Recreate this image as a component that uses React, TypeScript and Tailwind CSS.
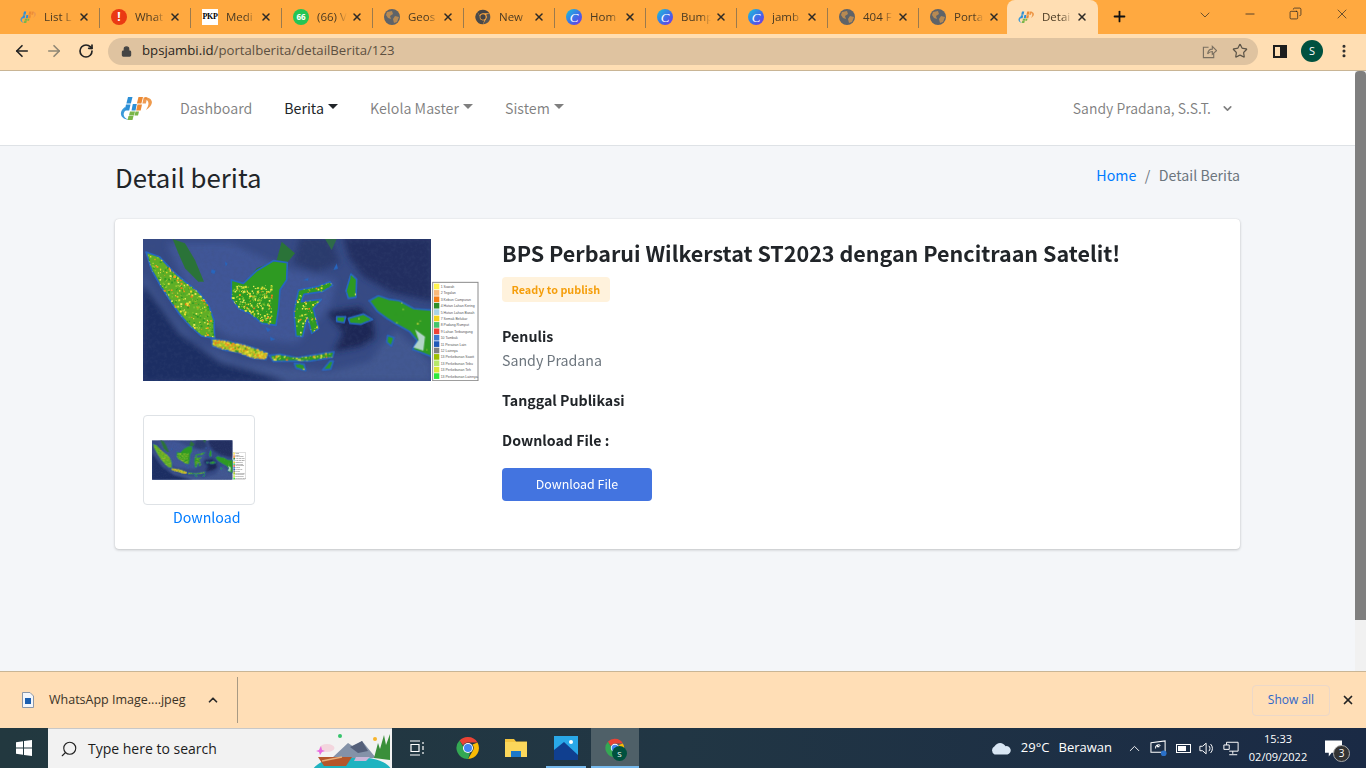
import type { ReactNode } from "react";
import {
  ArrowLeft,
  ArrowRight,
  ChevronDown,
  ChevronUp,
  Copy,
  Lock,
  Minus,
  MoreVertical,
  Plus,
  RotateCw,
  Search,
  Star,
  X,
} from "lucide-react";

const SOURCE = "[font-family:'Noto_Sans_CJK_SC','Noto_Sans',sans-serif]";
const UI = "[font-family:'Open_Sans','Noto_Sans',sans-serif]";

function Logo({ className }: { className?: string }) {
  return (
    <svg viewBox="0 0 32 26" className={className}>
      <path d="M5 12 C-1 16 -1 24 9 25 C4 23 1 19 7 14 Z" fill="#3b9ad9" />
      <path d="M25 2 C33 3 35 9 26 15 C30 9 29 5 24 3.500 Z" fill="#ee9a4d" />
      <path d="M8 2 h4.500 l-1.600 6.500 h-4.500 z" fill="#2c8fd6" />
      <path d="M6 9.500 h4.500 l-1.300 6 h-4.500 z" fill="#2c8fd6" />
      <path d="M12.800 9 h4 l-1.300 6.500 h-4 z" fill="#2c8fd6" />
      <path d="M18.500 2 h4.500 l-1.600 6.500 h-4.500 z" fill="#ec8a34" />
      <path d="M23.700 2.500 h3.500 l-1.300 6 h-3.500 z" fill="#ec8a34" opacity=".85" />
      <path d="M17.500 9.500 h4.500 l-1.300 6 h-4.500 z" fill="#ec8a34" />
      <path d="M10 16.500 h5 l-1 4 h-5 z" fill="#7ab648" />
      <path d="M15.500 16.500 h3.500 l-1 4 h-3.500 z" fill="#7ab648" />
      <path d="M8.500 21 h5 l-1 4 h-5 z" fill="#7ab648" />
    </svg>
  );
}

function Globe() {
  return (
    <svg viewBox="0 0 16 16" className="size-4 shrink-0">
      <circle cx="8" cy="8" r="8" fill="#5f6368" />
      <path d="M3 3 L8 2 L9 5 L6 7 L7 10 L4 9 L2 6 Z M11 7 L15 8 L13 13 L10 14 L9 10 Z" fill="#ffa940" opacity=".55" />
    </svg>
  );
}

function ChromeIcon({ size = 16, mono = false }: { size?: number; mono?: boolean }) {
  const [r, y, g] = mono ? ["#444", "#555", "#4a4a4a"] : ["#ea4335", "#fbbc04", "#34a853"];
  return (
    <svg viewBox="0 0 24 24" width={size} height={size} className="shrink-0">
      <path d="M12 1 A11 11 0 0 1 21.500 6.500 L12 6.500 A5.500 5.500 0 0 0 7 9.500 L3.500 4.500 A11 11 0 0 1 12 1 Z" fill={r} />
      <path d="M21.500 6.500 A11 11 0 0 1 12 23 L16.800 14.800 A5.500 5.500 0 0 0 16.500 8.500 Z" fill={y} />
      <path d="M12 23 A11 11 0 0 1 3.500 4.500 L8 12 A5.500 5.500 0 0 0 14 17 Z" fill={g} />
      <circle cx="12" cy="12" r="5" fill={mono ? "#ffa940" : "#fff"} />
      <circle cx="12" cy="12" r="4" fill={mono ? "#444" : "#4285f4"} />
    </svg>
  );
}

function Canva() {
  return (
    <span className="flex size-4 shrink-0 items-center justify-center rounded-full bg-[linear-gradient(135deg,#19c6d8,#3f6ee8_55%,#7a2fe0)] font-['Liberation_Serif',serif] text-[13px] italic leading-none text-white">
      C
    </span>
  );
}

const tabs: { title: string; icon: ReactNode }[] = [
  { title: "List L", icon: <Logo className="size-4 shrink-0" /> },
  {
    title: "What",
    icon: (
      <span className="flex size-4 shrink-0 items-center justify-center rounded-full bg-[#ea3a13] text-[12px] font-bold leading-none text-white">
        !
      </span>
    ),
  },
  {
    title: "Medi",
    icon: (
      <span className="flex h-4 w-4 shrink-0 items-center justify-center bg-white font-['Liberation_Serif',serif] text-[8px] font-bold leading-none tracking-tighter text-black">
        PKP
      </span>
    ),
  },
  {
    title: "(66) V",
    icon: (
      <span className="flex size-4 shrink-0 items-center justify-center rounded-full bg-[#25c554] text-[8px] font-bold leading-none text-white">
        66
      </span>
    ),
  },
  { title: "Geos", icon: <Globe /> },
  { title: "New", icon: <ChromeIcon mono /> },
  { title: "Hom", icon: <Canva /> },
  { title: "Bump", icon: <Canva /> },
  { title: "jamb", icon: <Canva /> },
  { title: "404 F", icon: <Globe /> },
  { title: "Porta", icon: <Globe /> },
  { title: "Detai", icon: <Logo className="size-4 shrink-0" /> },
];

function Tab({ title, icon, active, last }: { title: string; icon: ReactNode; active: boolean; last: boolean }) {
  return (
    <div
      className={`relative flex h-[34px] w-[91px] shrink-0 items-center pl-[11px] pr-[10px] ${
        active ? "-ml-[3px] rounded-t-lg bg-[#ffdeb3]" : ""
      }`}
    >
      {icon}
      <span className="ml-2 w-[30px] overflow-hidden whitespace-nowrap text-[11.5px] text-[#4a3a22] [mask-image:linear-gradient(90deg,#000_65%,transparent)]">
        {title}
      </span>
      <X className="ml-auto size-3 text-[#2d2a26]" strokeWidth={3} />
      {!active && !last && <span className="absolute right-0 top-2 h-5 w-px bg-[#9b7a4d]" />}
    </div>
  );
}

/* Satellite map, drawn in the coordinates of a 3x crop */
const ISLANDS: { id: string; d: string; n: number; hot: number }[] = [
  { id: "sum", d: "M48 66 L88 80 L130 125 L172 160 L208 188 L236 225 L252 270 L254 325 L214 318 L180 288 L148 252 L118 208 L92 168 L64 118 Z", n: 800, hot: 0.3 },
  { id: "kal", d: "M304 150 L340 160 L380 122 L430 92 L472 98 L470 150 L450 180 L446 235 L438 286 L395 280 L362 252 L326 236 L304 205 Z", n: 480, hot: 0.12 },
  { id: "jav", d: "M245 326 L290 333 L335 343 L380 356 L414 370 L408 388 L370 385 L325 368 L285 360 L248 348 Z", n: 560, hot: 0.75 },
  { id: "nus", d: "M418 376 L450 373 L500 383 L545 376 L612 365 L607 382 L540 393 L480 393 L430 394 Z", n: 110, hot: 0.35 },
  { id: "sul", d: "M506 180 L560 170 L600 155 L608 166 L578 185 L522 193 L514 215 L555 210 L574 208 L550 236 L566 296 L545 310 L532 262 L518 320 L498 318 L492 250 L498 213 Z", n: 220, hot: 0.3 },
  { id: "mal", d: "M648 182 L663 132 L680 148 L678 202 L655 205 Z M620 260 L647 260 L642 278 L620 274 Z M655 265 L700 252 L728 268 L692 283 L660 280 Z", n: 20, hot: 0.05 },
  { id: "pap", d: "M718 212 L745 197 L778 208 L808 212 L852 236 L905 240 L905 380 L875 368 L848 358 L862 332 L838 304 L798 282 L772 266 L742 244 Z M773 316 L792 323 L784 348 L770 336 Z", n: 20, hot: 0 },
  { id: "tim", d: "M578 420 L600 393 L610 393 L602 417 Z M493 400 L522 403 L527 422 L498 414 Z", n: 30, hot: 0.5 },
];

const BOUNDS: Record<string, [number, number, number, number]> = {
  sum: [48, 66, 207, 260],
  kal: [304, 165, 120, 122],
  jav: [245, 326, 170, 62],
  nus: [418, 365, 195, 29],
  sul: [492, 155, 116, 165],
  mal: [620, 132, 108, 150],
  pap: [718, 197, 187, 183],
  tim: [493, 393, 117, 30],
};

function rng(seed: number) {
  let s = seed;
  return () => {
    s = (s * 16807) % 2147483647;
    return s / 2147483647;
  };
}

const LEGEND: [string, string][] = [
  ["#fff34d", "1 Sawah"],
  ["#f9b97a", "2 Tegalan"],
  ["#f57f17", "3 Kebun Campuran"],
  ["#2f8f2a", "4 Hutan Lahan Kering"],
  ["#a7d3e8", "5 Hutan Lahan Basah"],
  ["#f2d21f", "7 Semak Belukar"],
  ["#43c46c", "8 Padang Rumput"],
  ["#ef4136", "9 Lahan Terbangung"],
  ["#3f78d0", "10 Tambak"],
  ["#2159b8", "11 Perairan Lain"],
  ["#808080", "12 Lainnya"],
  ["#9cbf00", "13 Perkebunan Sawit"],
  ["#b5e86a", "13 Perkebunan Tebu"],
  ["#dbe63a", "13 Perkebunan Teh"],
  ["#2ee83a", "13 Perkebunan Lainnya"],
];

function SatelliteMap({ prefix }: { prefix: string }) {
  const r = rng(4217);
  return (
    <svg viewBox="39 27 1008 426" className="block h-full w-full">
      <defs>
        {ISLANDS.map((i) => (
          <clipPath key={i.id} id={`${prefix}-${i.id}`}>
            <path d={i.d} />
          </clipPath>
        ))}
        <clipPath id={`${prefix}-frame`}>
          <rect x="39" y="27" width="864" height="426" />
        </clipPath>
        <filter id={`${prefix}-soft`}>
          <feGaussianBlur stdDeviation="9" />
        </filter>
        <filter id={`${prefix}-fine`}>
          <feGaussianBlur stdDeviation="1" />
        </filter>
        <filter id={`${prefix}-noise`}>
          <feTurbulence type="fractalNoise" baseFrequency="0.09" numOctaves="3" seed="8" />
          <feColorMatrix values="0 0 0 0 0.05  0 0 0 0 0.08  0 0 0 0 0.2  0 0 0 1.6 -0.65" />
        </filter>
      </defs>
      <g clipPath={`url(#${prefix}-frame)`}>
        <rect x="39" y="27" width="864" height="426" fill="#364a85" />
        <g filter={`url(#${prefix}-soft)`}>
          <path d="M110 40 L300 40 L480 120 L620 150 L600 230 L500 340 L300 320 L250 290 L170 170 Z" fill="#415697" />
          <path d="M39 135 L110 240 L200 340 L330 395 L470 415 L600 425 L720 395 L760 340 L800 300 L903 400 L903 453 L39 453 Z" fill="#425892" />
          <path d="M39 160 L150 310 L270 395 L430 440 L480 460 L30 460 Z" fill="#1f2f63" />
          <path d="M640 20 L910 20 L910 215 L790 190 L700 140 L655 80 Z" fill="#212f60" />
          <path d="M590 245 L690 230 L730 275 L735 325 L690 350 L610 365 L640 310 Z" fill="#1b2855" />
          <path d="M510 20 L600 20 L630 100 L560 125 L490 100 Z" fill="#2a3a6d" />
        </g>
        <rect x="39" y="27" width="864" height="426" filter={`url(#${prefix}-noise)`} opacity=".3" />
        <g filter={`url(#${prefix}-fine)`}>
          <path d="M128 27 L165 40 L195 90 L222 155 L205 155 L165 115 L145 70 Z" fill="#2c7339" />
          <path d="M345 160 L380 115 L440 90 L455 35 L495 70 L470 100 L420 115 L395 130 Z" fill="#2c7339" />
          <path d="M585 27 L620 27 L605 60 Z" fill="#2f6b49" />
          {ISLANDS.map((i) => {
            const [x, y, w, h] = BOUNDS[i.id];
            return (
              <g key={i.id}>
                <path d={i.d} fill={i.id === "sum" ? "#5fae28" : i.id === "jav" ? "#a8c42a" : "#2f9a24"} stroke="#2766bf" strokeWidth="5" strokeLinejoin="round" />
                <g clipPath={`url(#${prefix}-${i.id})`}>
                  {Array.from({ length: i.n }).map((_, k) => {
                    const hot = r() < i.hot;
                    const c = hot
                      ? ["#f2e23a", "#f0791c", "#e9d92f", "#f0991c"][Math.floor(r() * 4)]
                      : ["#7cc22e", "#d8df3a", "#ecec5c", "#2f9a24", "#2f9a24"][Math.floor(r() * 5)];
                    const s = 2 + r() * 4;
                    return <rect key={k} x={x + r() * w} y={y + r() * h} width={s} height={s} fill={c} />;
                  })}
                </g>
              </g>
            );
          })}
          <path d="M855 298 L885 320 L880 362 L850 352 L866 330 Z" fill="#c9dfe4" opacity=".85" />
          <path d="M245 118 l12 4 l-4 10 l-10 -4 Z M285 95 l8 6 l-6 8 Z M405 290 l18 8 l-10 8 Z M520 150 l16 -6 l-2 8 Z M610 120 l10 -20 l4 16 Z M420 320 l16 8 l-14 4 Z" fill="#2766bf" />
        </g>
      </g>
      <rect x="908" y="157" width="136" height="295" fill="#fff" stroke="#8a8a8a" strokeWidth="3" />
      {LEGEND.map(([c, label], idx) => (
        <g key={c}>
          <rect x="912" y={161 + idx * 19.2} width="16" height="17" fill={c} />
          <text x="932" y={174 + idx * 19.2} fontSize="10.500" fill="#555" fontFamily="'Liberation Sans', sans-serif">
            {label}
          </text>
        </g>
      ))}
    </svg>
  );
}

function NavItem({ label, active, caret = true }: { label: string; active?: boolean; caret?: boolean }) {
  return (
    <a className={`flex items-center ${active ? "text-[#212529]" : "text-[#00000080]"}`}>
      {label}
      {caret && <span className="ml-[4px] mt-[-3px] size-0 border-x-[5px] border-t-[5px] border-x-transparent border-t-current" />}
    </a>
  );
}

function Browser() {
  return (
    <div className={`shrink-0 ${UI}`}>
      <div className="flex h-[34px] items-stretch bg-[#ffa940] pl-[9px]">
        {tabs.map((t, i) => (
          <Tab key={i} title={t.title} icon={t.icon} active={i === 11} last={i === 10} />
        ))}
        <Plus className="ml-[13px] mt-[8px] size-[17px] text-[#111]" strokeWidth={2.5} />
        <div className="ml-auto flex items-start text-[#222]">
          <ChevronDown className="mr-[30px] mt-[7px] size-4" strokeWidth={1} />
          <Minus className="mr-[32px] mt-[7px] size-[14px]" strokeWidth={1.3} />
          <Copy className="mr-[32px] mt-[7px] size-[13px] -scale-x-100" strokeWidth={1.3} />
          <X className="mr-4 mt-[6px] size-4" strokeWidth={1} />
        </div>
      </div>
      <div className="flex h-[37px] items-center border-b border-[#c9b595] bg-[#ffdeb3] pb-[2px]">
        <ArrowLeft className="ml-[13px] size-[18px] text-[#222]" strokeWidth={2.2} />
        <ArrowRight className="ml-[14px] size-[18px] text-[#8f8674]" strokeWidth={2.2} />
        <RotateCw className="ml-[15px] size-4 text-[#222]" strokeWidth={2.5} />
        <div className="ml-[14px] flex h-[27px] w-[1150px] items-center rounded-full bg-[#dfc3a0] pl-[13px] pr-[10px]">
          <Lock className="size-[11px] fill-[#444] text-[#444]" strokeWidth={2.5} />
          <span className="ml-[10px] text-[13.2px] text-[#5d5040]">
            <span className="text-[#2b261e]">bpsjambi.id</span>/portalberita/detailBerita/123
          </span>
          <svg viewBox="0 0 16 16" className="ml-auto mr-[15px] size-[15px]" fill="none" stroke="#7a6f5f" strokeWidth="1.200">
            <path d="M7 3.500 H1.500 V14.500 H12.500 V10 M6 10.500 C6.500 7 9 5.500 11 5.500 V2.500 L15.500 7 L11 11 V8 C9 8 7.500 8.500 6 10.500 Z" />
          </svg>
          <Star className="size-4 text-[#5c5447]" strokeWidth={1.8} />
        </div>
        <span className="ml-[15px] flex h-[13px] w-[14px] justify-end border-2 border-[#1d1d1d]">
          <span className="h-full w-[5px] bg-[#1d1d1d]" />
        </span>
        <span className="ml-[14px] flex size-[22px] items-center justify-center rounded-full bg-[#00513f] text-[11px] text-white">
          S
        </span>
        <MoreVertical className="ml-[13px] size-4 text-[#2c2c2c]" strokeWidth={2.6} />
      </div>
    </div>
  );
}

function Page() {
  return (
    <div className={`flex min-h-0 flex-1 overflow-hidden bg-[#f4f6f9] ${SOURCE}`}>
      <div className="min-w-0 flex-1 text-[14.2px] text-[#212529]">
        <nav className="flex h-[75px] items-center border-b border-[#dee2e6] bg-white pl-[120px] pr-[121px]">
          <Logo className="h-[26px] w-8" />
          <div className="ml-7 flex items-center gap-8 pt-[1px]">
            <NavItem label="Dashboard" caret={false} />
            <NavItem label="Berita" active />
            <NavItem label="Kelola Master" />
            <NavItem label="Sistem" />
          </div>
          <div className="ml-auto flex items-center pt-[1px] text-[13.9px] text-[#00000080]">
            Sandy Pradana, S.S.T.
            <ChevronDown className="ml-[10px] size-[13px]" strokeWidth={3} />
          </div>
        </nav>
        <div className="flex h-[73px] items-start justify-between px-[115px] pt-[13px]">
          <h1 className="text-[25.8px] leading-[36px]">Detail berita</h1>
          <div className="flex items-center pt-[4px] leading-6">
            <a className="text-[#007bff]">Home</a>
            <span className="mx-[8.5px] text-[#6c757d]">/</span>
            <span className="text-[#6c757d]">Detail Berita</span>
          </div>
        </div>
        <section className="mx-[115px] flex h-[330px] rounded bg-white pl-7 pt-5 shadow-[0_0_1px_rgba(0,0,0,.13),0_1px_3px_rgba(0,0,0,.2)]">
          <div className="w-[359px] shrink-0">
            <div className="h-[142px] w-[336px]">
              <SatelliteMap prefix="main" />
            </div>
            <div className="mt-[34px] flex h-[90px] w-[112px] items-center justify-center rounded border border-[#dee2e6] bg-white">
              <div className="h-[40px] w-[94px]">
                <SatelliteMap prefix="thumb" />
              </div>
            </div>
            <a className="ml-[30px] block leading-6 text-[#007bff]">Download</a>
          </div>
          <div>
            <h2 className="text-[21.5px] font-bold leading-[28px]">BPS Perbarui Wilkerstat ST2023 dengan Pencitraan Satelit!</h2>
            <span className="mt-[10px] inline-block h-[25px] rounded bg-[#fff2dc] px-[9.5px] text-[10.8px] font-bold leading-[25px] text-[#f59e0b]">
              Ready to publish
            </span>
            <p className="mt-[22px] font-bold leading-6">Penulis</p>
            <p className="leading-6 text-[#6c757d]">Sandy Pradana</p>
            <p className="mt-4 font-bold leading-6">Tanggal Publikasi</p>
            <p className="mt-4 font-bold leading-6">Download File :</p>
            <button className="mt-[16px] h-[33px] w-[150px] rounded bg-[#4374e0] text-[12.4px] text-white">
              Download File
            </button>
          </div>
        </section>
      </div>
      <div className="w-[11px] shrink-0 bg-[#f1f1f1]">
        <div className="h-[549px] rounded-t-[4px] bg-[#7f7f7f]" />
      </div>
    </div>
  );
}

function DownloadBar() {
  return (
    <div className={`flex h-[57px] shrink-0 items-center border-t border-[#c9b595] bg-[#ffdeb6] ${UI}`}>
      <svg viewBox="0 0 12 16" className="ml-[22px] h-4 w-3">
        <path d="M.5.5 h7.500 l3.500 3.500 v11.500 h-11 z" fill="#f4f6fa" stroke="#8b97a8" />
        <rect x="3" y="6" width="6" height="6" fill="#1b5fb0" />
      </svg>
      <span className="ml-[15px] w-[137px] whitespace-nowrap text-[12.5px] text-[#3a3226]">WhatsApp Image....jpeg</span>
      <ChevronUp className="ml-5 size-[14px] text-[#2b2b2b]" strokeWidth={3} />
      <span className="ml-[17px] h-[46px] w-px bg-[#a89a84]" />
      <button className="ml-auto h-[31px] w-[78px] rounded border border-[#ecd8c8] text-xs text-[#2f66c8]">Show all</button>
      <X className="ml-[11px] mr-[11px] size-[14px] text-[#222]" strokeWidth={3} />
    </div>
  );
}

function Taskbar() {
  return (
    <div className={`flex h-10 shrink-0 items-center bg-[linear-gradient(90deg,#22383f,#213644_50%,#1a2a45)] text-white ${UI}`}>
      <div className="flex w-12 justify-center">
        <svg viewBox="0 0 16 16" className="size-4" fill="#fff">
          <path d="M0 2.300 L7 1.300 V7.600 H0 Z M8 1.100 L16 0 V7.600 H8 Z M0 8.400 H7 V14.700 L0 13.700 Z M8 8.400 H16 V16 L8 14.900 Z" />
        </svg>
      </div>
      <div className="relative flex h-10 w-[344px] items-center overflow-hidden border-t border-[#c8c8c8] bg-[#f2f2f2] pl-3 text-[#1c1c1c]">
        <Search className="size-[18px] -scale-x-100 text-[#222]" strokeWidth={1.5} />
        <span className="ml-[10px] text-[14px]">Type here to search</span>
        <svg viewBox="0 0 80 40" className="absolute right-0 top-0 h-10 w-20">
          <path d="M1 40 C8 30 25 28 40 28 C58 28 74 31 79 40 Z" fill="#1fb3c0" />
          <path d="M20 29 L36 14 L42 18 L50 12 L64 29 Z" fill="#8492a8" />
          <path d="M38 18 L50 12 L56 22 L46 24 Z" fill="#55607a" />
          <path d="M62 29 L66 14 L68 20 L72 6 L74 16 L78 5 V31 Z" fill="#3a8f3a" />
          <path d="M6 28 H40 L34 37 H12 Z" fill="#b5562a" />
          <path d="M10 32 L30 28" stroke="#e8b07a" strokeWidth="1.500" />
          <path d="M44 28 h14 l-4 4 h-12 Z" fill="#c9b6d8" />
          <ellipse cx="15" cy="19" rx="7.500" ry="4" fill="#f3d6de" />
          <path d="M4 22 L7 21 L9 17 L10 21 L13 22 L10 23 L8 26 L7 23 Z" fill="#e86be0" />
          <circle cx="28" cy="7" r="2" fill="#36c46c" />
          <circle cx="63" cy="10" r="2" fill="#f7b42c" />
        </svg>
      </div>
      <svg viewBox="0 0 16 16" className="ml-[17px] size-4" fill="none" stroke="#fff" strokeWidth="1.2">
        <path d="M1 1h10M1 15h10M2 4.500h8v7H2zM14 2v2M14 6v4M14 12v2" />
      </svg>
      <span className="ml-[31px]">
        <ChromeIcon size={24} />
      </span>
      <svg viewBox="0 0 24 24" className="ml-[24px] size-6">
        <path d="M1 3h9l2 2.500h11V21H1Z" fill="#f4c53e" />
        <rect x="1" y="6" width="22" height="15" fill="#fbd75b" />
        <rect x="7" y="15" width="10" height="6" fill="#1b78c9" />
      </svg>
      <div className="relative ml-[18px] flex h-10 w-10 items-center justify-center">
        <svg viewBox="0 0 24 24" className="size-6">
          <rect width="24" height="24" fill="#29a8e8" />
          <path d="M0 24 V14 L10 6 L24 19 V24 Z" fill="#103f8f" />
          <circle cx="17" cy="6" r="2" fill="#fff" />
        </svg>
        <span className="absolute inset-x-0 bottom-0 h-[2px] bg-[#76b9ed]" />
      </div>
      <div className="relative ml-[5px] flex h-10 w-12 items-center justify-center bg-[#4f6068]">
        <ChromeIcon size={20} />
        <span className="absolute bottom-[7px] right-3 flex size-[15px] items-center justify-center rounded-full bg-[#00513f] text-[8px] text-white">
          S
        </span>
        <span className="absolute inset-x-0 bottom-0 h-[2px] bg-[#76b9ed]" />
      </div>
      <svg viewBox="0 0 24 14" className="ml-auto h-[14px] w-[22px]" fill="#d8e6f4">
        <path d="M5 14 a5 5 0 0 1 0-9 a7 7 0 0 1 12 0 a4.500 4.500 0 0 1 2 9 Z" />
      </svg>
      <span className="ml-[9px] text-[13px]">29°C</span>
      <span className="ml-[9px] text-[13px]">Berawan</span>
      <ChevronUp className="ml-[14px] size-[17px]" strokeWidth={1.3} />
      <svg viewBox="0 0 18 18" className="ml-[7px] size-[17px]" fill="none" stroke="#fff" strokeWidth="1.1">
        <path d="M1 3 L16 1 V13 H1 Z M11 6 a3 3 0 0 0-5 3 M8 5 v2 h2" />
        <circle cx="14.500" cy="14" r="3" fill="#2a70c8" stroke="none" />
      </svg>
      <span className="relative ml-[9px] h-[9px] w-[15px] border border-white p-px">
        <span className="block h-full w-2 bg-white" />
      </span>
      <svg viewBox="0 0 18 16" className="ml-[8px] h-[15px] w-4" fill="none" stroke="#fff" strokeWidth="1.1">
        <path d="M1 5.500h3L8 2v12L4 10.500H1Z M11 5a4 4 0 0 1 0 6 M13 3a7 7 0 0 1 0 10" />
      </svg>
      <svg viewBox="0 0 18 16" className="ml-[8px] h-[15px] w-4" fill="none" stroke="#fff" strokeWidth="1.1">
        <path d="M4 4V1h13v10H7M1 4h6v5H1Z M11 11v3 M7 15h9" />
      </svg>
      <div className="ml-[9px] flex w-[60px] flex-col items-center text-[11px] leading-[18px]">
        <span>15:33</span>
        <span>02/09/2022</span>
      </div>
      <div className="relative ml-[17px] mr-[24px] h-[17px] w-[17px]">
        <svg viewBox="0 0 18 17" className="size-[17px]" fill="#fff">
          <path d="M0 0h18v13H7l-3 4v-4H0Z" />
        </svg>
        <span className="absolute -bottom-[5px] -right-2 flex size-[17px] items-center justify-center rounded-full border border-[#aaa] bg-[#333] text-[10px] leading-none">
          3
        </span>
      </div>
    </div>
  );
}

export default function App() {
  return (
    <div className="flex h-screen w-full flex-col overflow-hidden">
      <Browser />
      <Page />
      <DownloadBar />
      <Taskbar />
    </div>
  );
}
